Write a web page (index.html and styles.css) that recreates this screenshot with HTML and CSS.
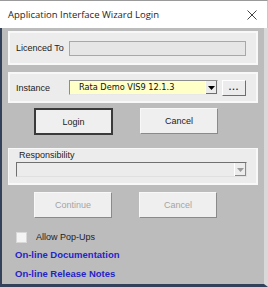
FILE: index.html
```html
<!DOCTYPE html>
<html>
<head>
<meta charset="utf-8">
<title>Application Interface Wizard Login</title>
<link rel="stylesheet" href="styles.css">
</head>
<body>
<div class="dlg">
	<div class="titlebar">
		<span class="title">Application Interface Wizard Login</span>
		<svg class="close" width="10" height="10" viewBox="0 0 10 10"><path d="M0.5 0.5L9.5 9.5M9.5 0.5L0.5 9.5" stroke="#444" stroke-width="1"/></svg>
	</div>
	<div class="main">
		<div class="panel panel-lic">
			<span class="lbl">Licenced To</span>
			<div class="txt"></div>
		</div>
		<div class="panel panel-inst">
			<span class="lbl">Instance</span>
			<div class="combo combo-yellow">
				<span class="combo-val">Rata Demo VIS9 12.1.3</span>
				<span class="drop"><svg width="7" height="4" viewBox="0 0 7 4"><path d="M0 0H7L3.5 4Z" fill="#000"/></svg></span>
			</div>
			<div class="dots">...</div>
		</div>
		<div class="btns">
			<div class="btn btn-default">Login</div>
			<div class="btn">Cancel</div>
		</div>
		<div class="panel panel-resp">
			<div class="resp-lbl">Responsibility</div>
			<div class="combo combo-dis">
				<span class="combo-val"></span>
				<span class="drop drop-dis"><svg width="7" height="4" viewBox="0 0 7 4"><path d="M0 0H7L3.5 4Z" fill="#9a9a9a"/></svg></span>
			</div>
		</div>
		<div class="btns btns-dis">
			<div class="btn btn-dis">Continue</div>
			<div class="btn btn-dis">Cancel</div>
		</div>
		<div class="chk-row">
			<span class="chk"></span>
			<span class="chk-lbl">Allow Pop-Ups</span>
		</div>
		<a class="link link-doc">On-line Documentation</a>
		<a class="link">On-line Release Notes</a>
	</div>
</div>
</body>
</html>
```

FILE: styles.css
```css
*,*:before,*:after{
	padding: 0;
	margin: 0;
	box-sizing: border-box;
}
body{
	background: #fff;
	font-family: "Liberation Sans", Arial, sans-serif;
	font-size: 9px;
	color: #222;
}
.dlg{
	width: 268px;
	height: 287px;
	display: flex;
	flex-direction: column;
}
.titlebar{
	height: 28px;
	background: #fff;
	border-top: 1px solid #9a9a9a;
	border-right: 1px solid #c8c8c8;
	display: flex;
	align-items: center;
	justify-content: space-between;
	padding: 0 10px 0 8px;
}
.title{
	font-family: "Open Sans", "Liberation Sans", sans-serif;
	font-size: 9.5px;
	color: #1e1e1e;
}
.close{
	display: block;
}
.main{
	flex: 1;
	background: #bcbcbc;
	border-left: 2px solid #34415b;
	border-bottom: 3px solid #34415b;
	border-right: 4px solid #d9d9d9;
	padding: 3px 6px 0 6px;
	display: flex;
	flex-direction: column;
}
.panel{
	background: #ececec;
	border: 2px solid #f8f8f8;
	display: flex;
	align-items: center;
	padding: 0 10px 0 6px;
}
.panel-lic{
	height: 34px;
}
.panel-inst{
	height: 31px;
	margin-top: 7px;
}
.lbl{
	width: 53px;
	color: #222;
}
.txt{
	width: 177px;
	height: 15px;
	background: #e6e6e6;
	border: 1px solid #a8a8a8;
}
.combo{
	height: 15px;
	display: flex;
	align-items: stretch;
	border: 1px solid #8c8c8c;
	border-right-color: #e8e8e8;
	border-bottom-color: #e8e8e8;
}
.combo-yellow{
	width: 149px;
	background: #ffffc8;
}
.combo-val{
	flex: 1;
	padding-left: 9px;
	line-height: 13px;
	font-family: "DejaVu Sans", sans-serif;
	font-size: 8.2px;
	color: #111;
}
.drop{
	width: 12px;
	background: #ececec;
	border-left: 1px solid #fff;
	display: flex;
	align-items: center;
	justify-content: center;
	box-shadow: inset -1px -1px 0 #6e6e6e;
}
.dots{
	width: 24px;
	height: 16px;
	margin-left: 4px;
	background: #ececec;
	border: 1px solid #fff;
	border-right-color: #6e6e6e;
	border-bottom-color: #6e6e6e;
	text-align: center;
	line-height: 12px;
	font-weight: bold;
	letter-spacing: 1px;
	color: #222;
}
.btns{
	display: flex;
	padding-left: 26px;
	gap: 27px;
	margin-top: 5px;
}
.btn{
	width: 78px;
	height: 26px;
	background: #efefef;
	border: 1px solid #f8f8f8;
	border-right-color: #8a8a8a;
	border-bottom-color: #8a8a8a;
	display: flex;
	align-items: center;
	justify-content: center;
	color: #222;
}
.btn-default{
	width: 79px;
	height: 27px;
	border: 2px solid #3a3a3a;
}
.panel-resp{
	margin-top: 13px;
	height: 37px;
	flex-direction: column;
	align-items: flex-start;
	justify-content: flex-start;
	padding: 0 8px 0 7px;
	border-left-width: 1px;
	border-top-width: 1px;
}
.resp-lbl{
	line-height: 11px;
	margin-left: 3px;
	margin-top: 1px;
	color: #222;
}
.combo-dis{
	width: 231px;
	margin-top: 1px;
	background: #ececec;
	border-color: #707070 #e0e0e0 #e0e0e0 #707070;
}
.drop-dis{
	background: #ececec;
	box-shadow: inset -1px -1px 0 #8a8a8a;
}
.btns-dis{
	margin-top: 7px;
}
.btn-dis{
	color: #a4a4a4;
}
.chk-row{
	display: flex;
	align-items: center;
	margin-top: 14px;
	padding-left: 8px;
	height: 10px;
}
.chk{
	width: 11px;
	height: 11px;
	background: #f4f4f4;
	border: 1px solid #d8d8d8;
}
.chk-lbl{
	margin-left: 9px;
	color: #222;
}
.link{
	display: block;
	font-weight: bold;
	font-size: 9.5px;
	color: #2424c8;
	padding-left: 7px;
	line-height: 12px;
}
.link-doc{
	margin-top: 7px;
}
.link + .link{
	margin-top: 7px;
}
```
